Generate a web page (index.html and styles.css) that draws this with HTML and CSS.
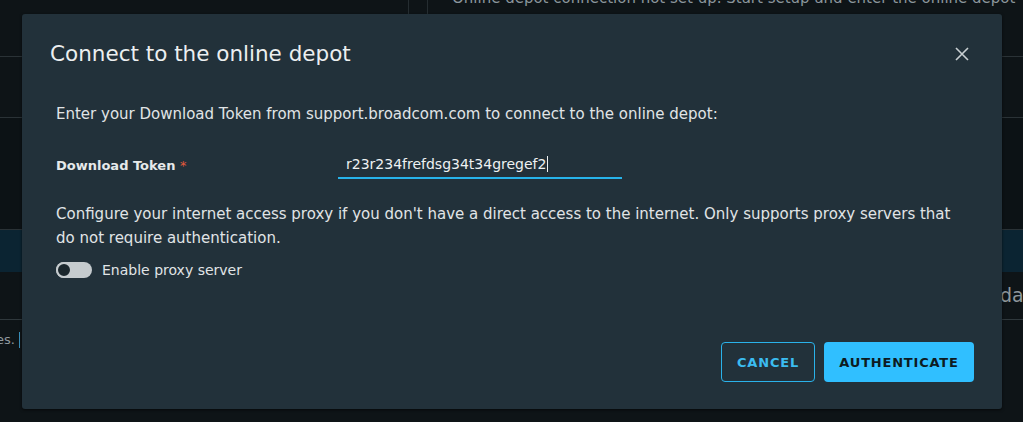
FILE: index.html
```html
<!DOCTYPE html>
<html>
    <head>
        <meta charset="UTF-8" />
        <title>Connect to the online depot</title>
        <link rel="stylesheet" href="styles.css">
    </head>

    <body>
        <div id="backdrop">
            <div class="bg-top">
                <div class="bg-spacer"></div>
                <div class="bg-divider"></div>
                <p class="bg-notice">Online depot connection not set up. Start setup and enter the online depot</p>
            </div>
            <div class="bg-row" style="height: 61px"></div>
            <div class="bg-row bg-panel" style="height: 112px"></div>
            <div class="bg-row bg-selected" style="height: 42px"></div>
            <div class="bg-row bg-text-row" style="height: 48px"><span class="bg-right-text">da</span></div>
            <div class="bg-row bg-last">
                <span class="bg-left-text">es.</span><span class="bg-link-bar"></span>
            </div>
        </div>

        <div id="modal">
            <div class="modal-header">
                <h3 class="modal-title">Connect to the online depot</h3>
                <button class="close-btn" aria-label="Close">
                    <svg width="16" height="16" viewBox="0 0 16 16">
                        <path d="M2 2 L14 14 M14 2 L2 14" stroke="#c9cfd2" stroke-width="1.6" fill="none" />
                    </svg>
                </button>
            </div>

            <div class="modal-body">
                <p class="intro">Enter your Download Token from support.broadcom.com to connect to the online depot:</p>

                <div class="form-row">
                    <label class="field-label">Download Token <span class="required">*</span></label>
                    <div class="input-wrap">
                        <span class="input-value">r23r234frefdsg34t34gregef2</span><span class="caret"></span>
                    </div>
                </div>

                <p class="proxy-text">Configure your internet access proxy if you don't have a direct access to the internet. Only supports proxy servers that do not require authentication.</p>

                <div class="toggle-row">
                    <span class="toggle"><span class="knob"></span></span>
                    <span class="toggle-label">Enable proxy server</span>
                </div>
            </div>

            <div class="modal-footer">
                <button class="btn btn-outline">Cancel</button>
                <button class="btn btn-primary">Authenticate</button>
            </div>
        </div>
    </body>
</html>
```

FILE: styles.css
```css
* {
    margin: 0;
    padding: 0;
    box-sizing: border-box;
}

body {
    width: 1023px;
    height: 422px;
    overflow: hidden;
    position: relative;
    background-color: #0e1417;
    font-family: "DejaVu Sans", "Open Sans", sans-serif;
    color: #dfe3e5;
}

/* page behind the modal */
#backdrop {
    display: flex;
    flex-direction: column;
    width: 100%;
    height: 100%;
}

.bg-top {
    display: flex;
    height: 57px;
    border-bottom: 1px solid #2a3236;
    overflow: hidden;
}

.bg-spacer {
    flex-shrink: 0;
    width: 409px;
    border-right: 1px solid #252d31;
}

.bg-divider {
    flex-shrink: 0;
    width: 19px;
    border-right: 1px solid #252d31;
}

.bg-notice {
    margin-left: 24px;
    margin-top: -11px;
    font-size: 15px;
    color: #8b969c;
    white-space: nowrap;
}

.bg-row {
    border-bottom: 1px solid #2a3236;
    position: relative;
}

.bg-panel {
    background-color: #0c1215;
}

.bg-selected {
    background-color: #0b2432;
    border-bottom: none;
}

.bg-text-row {
    border-bottom: 1px solid #2f383c;
}

.bg-right-text {
    position: absolute;
    left: 1000px;
    top: 12px;
    font-size: 19px;
    color: #8f999e;
}

.bg-last {
    flex: 1;
    border-bottom: none;
    display: flex;
    align-items: flex-start;
    padding-top: 12px;
}

.bg-left-text {
    font-size: 13px;
    color: #8f999e;
    margin-left: -4px;
}

.bg-link-bar {
    width: 1px;
    height: 16px;
    margin-left: 4px;
    background-color: #3a8fba;
}

/* modal */
#modal {
    position: absolute;
    left: 22px;
    top: 14px;
    width: 980px;
    height: 395px;
    background-color: #22313a;
    border-radius: 3px;
    box-shadow: 0 1px 3px rgba(0, 0, 0, 0.6);
    display: flex;
    flex-direction: column;
}

.modal-header {
    display: flex;
    justify-content: space-between;
    align-items: center;
    padding: 24px 32px 0 28px;
}

.modal-title {
    font-size: 21.5px;
    font-weight: 400;
    line-height: 32px;
    color: #eceff0;
}

.close-btn {
    background: none;
    border: none;
    width: 16px;
    height: 16px;
    display: flex;
}

.modal-body {
    padding: 32px 34px 0 34px;
    font-size: 15px;
    color: #e0e4e6;
}

.intro {
    line-height: 24px;
}

.form-row {
    display: flex;
    align-items: center;
    margin-top: 25px;
}

.field-label {
    width: 282px;
    font-weight: 700;
    font-size: 13px;
    color: #e6e9ea;
}

.required {
    color: #e3593b;
    font-weight: 400;
}

.input-wrap {
    width: 284px;
    height: 28px;
    padding: 0 8px;
    display: flex;
    align-items: center;
    border-bottom: 2px solid #27b3ea;
    font-size: 14px;
    color: #eef1f2;
}

.caret {
    width: 1px;
    height: 16px;
    margin-left: 1px;
    background-color: #eef1f2;
}

.proxy-text {
    margin-top: 23px;
    line-height: 24px;
    max-width: 905px;
}

.toggle-row {
    display: flex;
    align-items: center;
    gap: 10px;
    margin-top: 12px;
}

.toggle {
    width: 36px;
    height: 16px;
    border-radius: 8px;
    background-color: #c5cbce;
    display: flex;
    align-items: center;
}

.knob {
    width: 16px;
    height: 16px;
    border-radius: 50%;
    background-color: #1b272d;
    border: 2px solid #c5cbce;
}

.toggle-label {
    font-size: 14px;
}

.modal-footer {
    margin-top: auto;
    display: flex;
    justify-content: flex-end;
    gap: 9px;
    padding: 0 28px 27px 0;
}

.btn {
    height: 40px;
    border-radius: 4px;
    font-family: "DejaVu Sans", "Open Sans", sans-serif;
    font-size: 13px;
    font-weight: 700;
    letter-spacing: 0.8px;
    text-transform: uppercase;
}

.btn-outline {
    width: 94px;
    background: transparent;
    border: 1px solid #2ab2ea;
    color: #3bbcf0;
}

.btn-primary {
    width: 150px;
    background-color: #30bfff;
    border: none;
    color: #0d1b22;
}
```
